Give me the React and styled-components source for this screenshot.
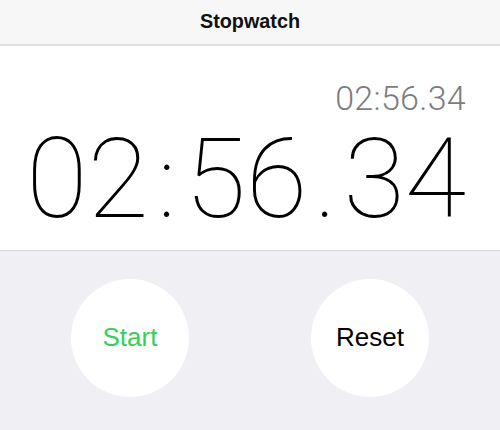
import styled, { createGlobalStyle } from "styled-components"

const Global = createGlobalStyle`
    html, body {
        margin: 0;
        padding: 0;
        background: #efeff4;
    }
    body {
        width: 500px;
        height: 430px;
        overflow: hidden;
    }
`

const Screen = styled.div`
    width: 500px;
    height: 430px;
    display: flex;
    flex-direction: column;
    background: #efeff4;
    font-family: "Liberation Sans", Arial, sans-serif;
`

const Header = styled.header`
    box-sizing: border-box;
    height: 46px;
    padding-bottom: 2px;
    background: #f7f7f7;
    border-bottom: 2px solid #e0e0e0;
    display: flex;
    align-items: center;
    justify-content: center;
    font-size: 19.8px;
    font-weight: 700;
    color: #111;
`

const Display = styled.section`
    height: 204px;
    background: #fff;
    border-bottom: 1px solid #d8d8dc;
    display: flex;
    flex-direction: column;
    align-items: flex-end;
    padding: 0 34px 0 0;
`

const LapTime = styled.div`
    margin-top: 35px;
    font-family: Roboto, "Liberation Sans", sans-serif;
    font-weight: 300;
    font-size: 34px;
    line-height: 34px;
    color: #7d7d7d;
    letter-spacing: 0.3px;
`

const MainTime = styled.div`
    margin-top: 14px;
    display: flex;
    align-items: baseline;
    font-family: Roboto, "Liberation Sans", sans-serif;
    font-weight: 100;
    font-size: 112px;
    line-height: 100px;
    color: #000;
`

const Digits = styled.span``

const Sep = styled.span`
    width: 36px;
    text-align: center;
    font-size: 100px;
    line-height: 100px;
`

const Controls = styled.div`
    flex: 1;
    display: flex;
    justify-content: space-between;
    align-items: flex-start;
    padding: 28px 71px 0;
`

const RoundButton = styled.button`
    width: 118px;
    height: 118px;
    border-radius: 50%;
    border: none;
    background: #fff;
    font-family: "Liberation Sans", Arial, sans-serif;
    font-size: 26px;
    color: ${p => p.$color || "#000"};
    display: flex;
    align-items: center;
    justify-content: center;
    padding: 0 0 2px;
`

export default function App() {
    return (
        <Screen>
            <Global />
            <Header>Stopwatch</Header>
            <Display>
                <LapTime>02:56.34</LapTime>
                <MainTime>
                    <Digits>02</Digits>
                    <Sep>:</Sep>
                    <Digits>56</Digits>
                    <Sep>.</Sep>
                    <Digits>34</Digits>
                </MainTime>
            </Display>
            <Controls>
                <RoundButton $color="#34d058">Start</RoundButton>
                <RoundButton>Reset</RoundButton>
            </Controls>
        </Screen>
    )
}
